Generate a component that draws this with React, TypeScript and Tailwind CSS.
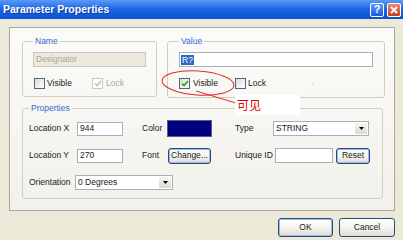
import clsx from "clsx";

function CheckBox({ checked, disabled }: { checked?: boolean; disabled?: boolean }) {
  return (
    <div
      className={clsx(
        "flex h-[11px] w-[11px] shrink-0 items-center justify-center border",
        disabled
          ? "border-[#cac8bb] bg-white"
          : "border-[#4d6682] bg-gradient-to-br from-[#dcdcd7] to-white"
      )}
    >
      {checked && (
        <svg width="8" height="7" viewBox="0 0 8 7">
          <path
            d="M1 3.5 L3 5.5 L7 1"
            fill="none"
            stroke={disabled ? "#c4c2b4" : "#21a121"}
            strokeWidth="1.6"
          />
        </svg>
      )}
    </div>
  );
}

function XpButton({
  children,
  focused,
  className,
}: {
  children: React.ReactNode;
  focused?: boolean;
  className?: string;
}) {
  return (
    <div
      className={clsx(
        "flex shrink-0 items-center justify-center rounded-[3px] border border-[#2a4a75] bg-gradient-to-b from-white via-[#f5f4ef] to-[#dedbd0] text-[#1a1a1a]",
        focused && "shadow-[inset_0_0_0_1px_#9bbbec]",
        className
      )}
    >
      {children}
    </div>
  );
}

function Combo({ value, className }: { value: string; className?: string }) {
  return (
    <div className={clsx("flex shrink-0 items-stretch border border-[#a8b0ba] bg-white", className)}>
      <span className="flex flex-1 items-center pl-[2px]">{value}</span>
      <div className="m-[1px] flex w-[12px] items-center justify-center bg-gradient-to-b from-[#f6f5f0] to-[#dcd9cc]">
        <svg width="5" height="3" viewBox="0 0 5 3">
          <path d="M0 0 H5 L2.5 3 Z" fill="#000" />
        </svg>
      </div>
    </div>
  );
}

function Field({ value, className }: { value?: string; className?: string }) {
  return (
    <div className={clsx("flex shrink-0 items-center border border-[#a8b0ba] bg-white pl-[2px]", className)}>
      {value}
    </div>
  );
}

export default function App() {
  return (
    <div className="relative h-[240px] w-[403px] overflow-hidden bg-[#ece9d8] font-['Liberation_Sans',Arial,sans-serif] text-[8.5px] text-[#1a1a1a]">
      {/* title bar */}
      <div className="flex h-[19px] items-center bg-gradient-to-b from-[#5a9af8] via-[#1a63e4] to-[#0d52d2] pl-[3px] pr-[2px]">
        <span className="flex-1 text-[10.5px] font-bold text-white [text-shadow:1px_1px_0_#0a3aa0]">
          Parameter Properties
        </span>
        <div className="flex h-[14px] w-[14px] items-center justify-center rounded-[2px] border border-white bg-gradient-to-b from-[#5d9af7] to-[#1d57d8] text-[11px] font-bold leading-none text-white">
          ?
        </div>
        <div className="ml-[3px] flex h-[14px] w-[14px] items-center justify-center rounded-[2px] border border-white bg-gradient-to-b from-[#ef8a6a] to-[#c83d19]">
          <svg width="8" height="8" viewBox="0 0 8 8">
            <path d="M1 1 L7 7 M7 1 L1 7" stroke="#fff" strokeWidth="1.8" />
          </svg>
        </div>
      </div>

      {/* tab page */}
      <div className="ml-[9px] mt-[8px] h-[184px] w-[386px] border border-[#a9a79d] bg-gradient-to-b from-[#fbfbf9] to-[#f2f1eb] pl-[12px] pt-[8px]">
        <div className="flex items-start">
          <fieldset className="h-[61px] w-[134px] rounded-[3px] border border-[#d0d0bf] px-[10px]">
            <legend className="px-[2px] leading-[10px] text-[#3668d4]">Name</legend>
            <div className="mt-[6px] flex h-[15px] w-[113px] items-center border border-[#cac8bb] bg-[#ebe9db] pl-[2px] text-[#aca899]">
              Designator
            </div>
            <div className="mt-[11px] flex h-[11px] items-center pl-[1px]">
              <div className="flex w-[58px] items-center">
                <CheckBox />
                <span className="ml-[2px]">Visible</span>
              </div>
              <CheckBox checked disabled />
              <span className="ml-[3px] text-[#aca899]">Lock</span>
            </div>
          </fieldset>

          <fieldset className="ml-[10px] h-[62px] w-[217px] rounded-[3px] border border-[#d0d0bf] px-[11px]">
            <legend className="px-[2px] leading-[10px] text-[#3668d4]">Value</legend>
            <div className="mt-[6px] flex h-[15px] w-[194px] items-center border border-[#a8b0ba] bg-white pl-[1px]">
              <span className="bg-[#316ac5] px-[1px] leading-[10px] text-white">R?</span>
            </div>
            <div className="mt-[11px] flex h-[11px] items-center">
              <div className="flex w-[56px] items-center">
                <CheckBox checked />
                <span className="ml-[3px]">Visible</span>
              </div>
              <CheckBox />
              <span className="ml-[2px]">Lock</span>
              <span className="ml-[46px] h-[1px] w-[1px] bg-[#c9b7b0]" />
            </div>
          </fieldset>
        </div>

        <fieldset className="mt-[5px] h-[96px] w-[361px] rounded-[3px] border border-[#d0d0bf] pl-[6px]">
          <legend className="px-[2px] leading-[10px] text-[#3668d4]">Properties</legend>
          <div className="mt-[7px] flex flex-col gap-[10px]">
            <div className="flex h-[17px] items-center">
              <span className="w-[48px] shrink-0">Location X</span>
              <Field value="944" className="h-[14px] w-[46px]" />
              <span className="w-[19px] shrink-0" />
              <span className="w-[25px] shrink-0">Color</span>
              <div className="h-[17px] w-[45px] shrink-0 border border-[#5a5a8a] bg-[#000080]" />
              <span className="w-[23px] shrink-0" />
              <span className="w-[38px] shrink-0">Type</span>
              <Combo value="STRING" className="h-[15px] w-[96px]" />
            </div>
            <div className="flex h-[17px] items-center">
              <span className="w-[48px] shrink-0">Location Y</span>
              <Field value="270" className="h-[14px] w-[46px]" />
              <span className="w-[19px] shrink-0" />
              <span className="w-[26px] shrink-0">Font</span>
              <XpButton focused className="h-[16px] w-[43px]">
                Change...
              </XpButton>
              <span className="w-[24px] shrink-0" />
              <span className="w-[40px] shrink-0">Unique ID</span>
              <Field className="h-[15px] w-[58px]" />
              <XpButton focused className="ml-[3px] h-[16px] w-[34px]">
                Reset
              </XpButton>
            </div>
            <div className="flex h-[17px] items-center">
              <span className="w-[46px] shrink-0">Orientation</span>
              <Combo value="0 Degrees" className="h-[15px] w-[98px]" />
            </div>
          </div>
        </fieldset>
      </div>

      {/* dialog buttons */}
      <div className="mt-[7px] flex justify-end gap-[6px] pr-[8px]">
        <XpButton focused className="h-[19px] w-[55px]">
          OK
        </XpButton>
        <XpButton className="h-[19px] w-[56px]">Cancel</XpButton>
      </div>

      {/* hand-drawn annotation over the dialog */}
      <svg className="pointer-events-none absolute left-0 top-0" width="403" height="240">
        <ellipse cx="198" cy="83" rx="36" ry="12" fill="none" stroke="#e02a2a" strokeWidth="1" transform="rotate(4 198 83)" />
        <path d="M196 91 L236 103" stroke="#e02a2a" strokeWidth="1" fill="none" />
      </svg>
      <div className="absolute left-[235px] top-[95px] flex h-[20px] w-[65px] items-center bg-white pl-[2px] font-['Noto_Sans_CJK_SC',sans-serif] text-[12px] leading-none text-[#e00000]">
        可见
      </div>
    </div>
  );
}
